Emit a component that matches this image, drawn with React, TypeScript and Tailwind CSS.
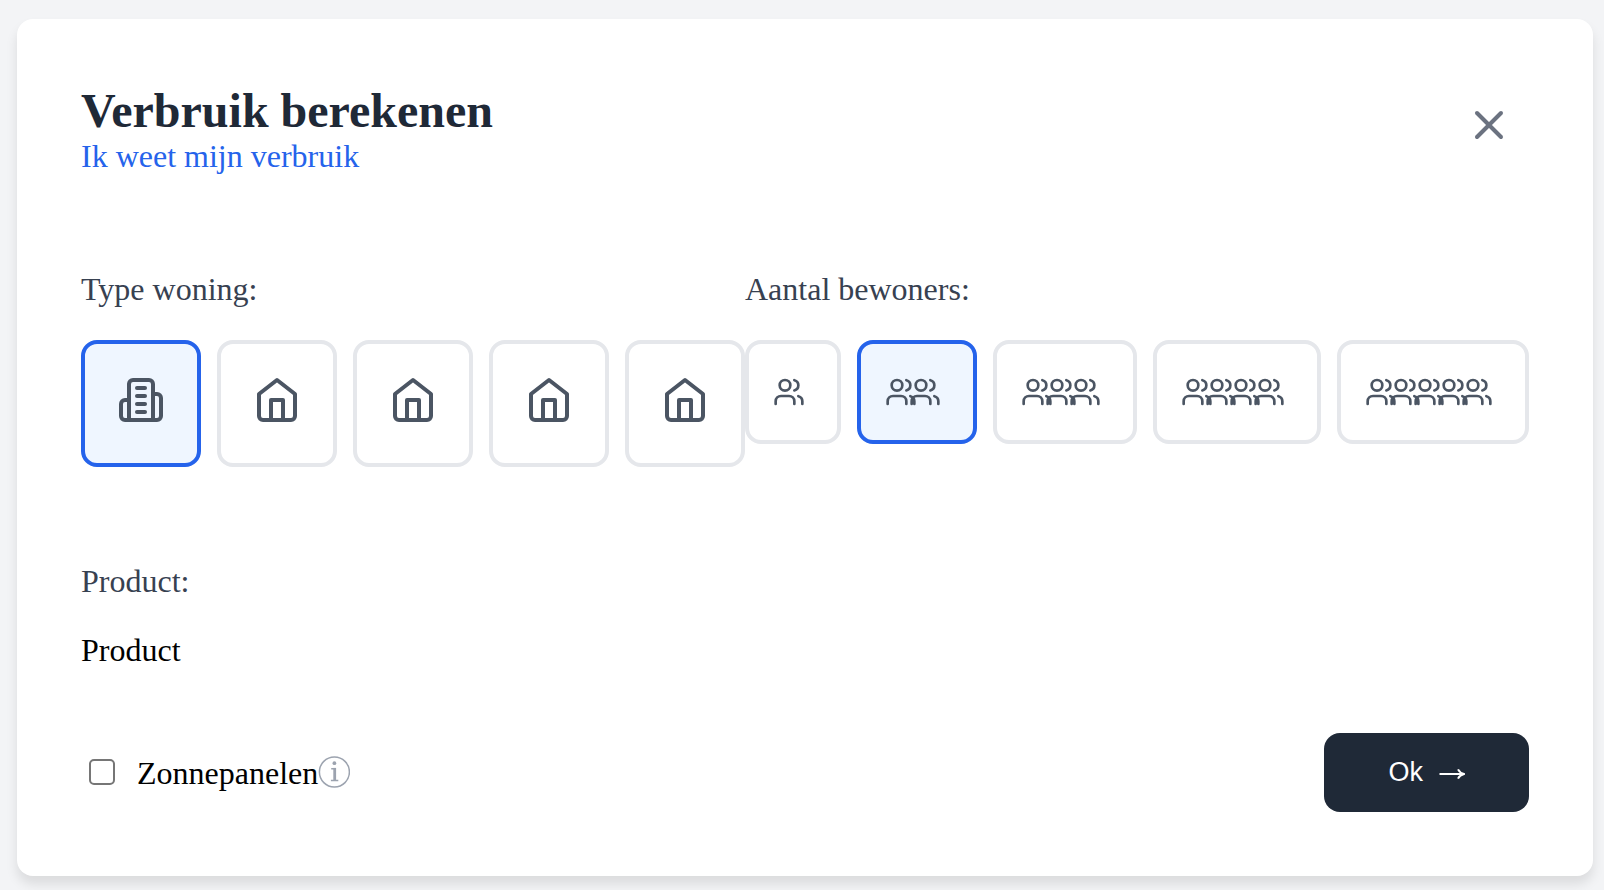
import { useState, type ReactNode } from "react";

function Icon({ className, children }: { className: string; children: ReactNode }) {
  return (
    <svg
      viewBox="0 0 24 24"
      fill="none"
      stroke="currentColor"
      strokeWidth="2"
      strokeLinecap="round"
      strokeLinejoin="round"
      aria-hidden="true"
      className={className}
    >
      {children}
    </svg>
  );
}

function BuildingIcon() {
  return (
    <Icon className="size-12">
      <path d="M6 22V4a2 2 0 0 1 2-2h8a2 2 0 0 1 2 2v18Z" />
      <path d="M6 12H4a2 2 0 0 0-2 2v6a2 2 0 0 0 2 2h2" />
      <path d="M18 9h2a2 2 0 0 1 2 2v9a2 2 0 0 1-2 2h-2" />
      <path d="M10 6h4" />
      <path d="M10 10h4" />
      <path d="M10 14h4" />
      <path d="M10 18h4" />
    </Icon>
  );
}

function HouseIcon() {
  return (
    <Icon className="size-12">
      <path d="m3 9 9-7 9 7v11a2 2 0 0 1-2 2H5a2 2 0 0 1-2-2z" />
      <polyline points="9 22 9 12 15 12 15 22" />
    </Icon>
  );
}

function UsersIcon() {
  return (
    <Icon className="-ml-2 size-8 shrink-0">
      <path d="M16 21v-2a4 4 0 0 0-4-4H6a4 4 0 0 0-4 4v2" />
      <circle cx="9" cy="7" r="4" />
      <path d="M22 21v-2a4 4 0 0 0-3-3.87" />
      <path d="M16 3.13a4 4 0 0 1 0 7.75" />
    </Icon>
  );
}

const homes = ["Appartement", "Tussenwoning", "Hoekwoning", "Twee-onder-een-kap", "Vrijstaand"];
const residents = [1, 2, 3, 4, 5];

const option = "flex rounded-2xl border-4 px-8 pt-8 text-[#4b5563] cursor-pointer";
const idle = "border-[#e5e7eb] bg-white";
const active = "border-[#2563eb] bg-[#eff6ff]";

export default function App() {
  const [home, setHome] = useState(0);
  const [count, setCount] = useState(2);
  const [solar, setSolar] = useState(false);

  return (
    <div className="min-h-screen bg-[#f3f4f6] pt-[19px] pr-[11px] pb-[14px] pl-[17px] font-['Liberation_Serif',serif] text-[32px] leading-[37px] text-black">
      <main className="rounded-2xl bg-white p-16 shadow-[0_8px_12px_rgba(0,0,0,0.1)]">
        <header className="mb-24 flex items-center justify-between">
          <div>
            <h1 className="text-[48px] leading-[55px] font-bold text-[#1f2937]">Verbruik berekenen</h1>
            <a href="#verbruik" className="block text-[#2563eb]">
              Ik weet mijn verbruik
            </a>
          </div>
          <button type="button" aria-label="Sluiten" className="cursor-pointer px-4 pt-4 pb-6 text-[#6b7280]">
            <Icon className="size-12">
              <path d="M18 6 6 18" />
              <path d="m6 6 12 12" />
            </Icon>
          </button>
        </header>

        <div className="mb-24 flex items-start justify-between">
          <section aria-labelledby="woning">
            <h2 id="woning" className="mb-8 text-[#374151]">
              Type woning:
            </h2>
            <div className="flex gap-4">
              {homes.map((name, i) => (
                <button
                  key={name}
                  type="button"
                  aria-label={name}
                  aria-pressed={home === i}
                  onClick={() => setHome(i)}
                  className={`${option} pb-[39px] ${home === i ? active : idle}`}
                >
                  {i === 0 ? <BuildingIcon /> : <HouseIcon />}
                </button>
              ))}
            </div>
          </section>

          <section aria-labelledby="bewoners">
            <h2 id="bewoners" className="mb-8 text-[#374151]">
              Aantal bewoners:
            </h2>
            <div className="flex gap-4">
              {residents.map((n) => (
                <button
                  key={n}
                  type="button"
                  aria-label={`${n}`}
                  aria-pressed={count === n}
                  onClick={() => setCount(n)}
                  className={`${option} pb-8 ${count === n ? active : idle}`}
                >
                  {Array.from({ length: n }, (_, i) => (
                    <UsersIcon key={i} />
                  ))}
                </button>
              ))}
            </div>
          </section>
        </div>

        <section className="mb-16">
          <h2 className="mb-8 text-[#374151]">Product:</h2>
          <p>Product</p>
        </section>

        <footer className="flex items-center justify-between">
          <div className="flex items-center pb-0.5">
            <input
              id="zonnepanelen"
              type="checkbox"
              checked={solar}
              onChange={(e) => setSolar(e.target.checked)}
              className="mr-[22px] ml-2 size-[26px] appearance-none rounded-[5px] border-2 border-[#767676] bg-white checked:bg-[#2563eb]"
            />
            <label htmlFor="zonnepanelen" className="pt-1">
              Zonnepanelen
            </label>
            <svg viewBox="0 0 32 32" fill="none" stroke="#9ca3af" role="img" aria-label="Informatie" className="size-8">
              <circle cx="16.4" cy="16" r="15" strokeWidth="1.5" />
              <circle cx="16.4" cy="7.2" r="1.9" fill="#9ca3af" stroke="none" />
              <path d="M13.2 12.7h3.4M12.9 24.5h7.4" strokeWidth="1.6" />
              <path d="M16.7 11.9v12.6" strokeWidth="2.8" />
            </svg>
          </div>
          <button
            type="button"
            className="flex cursor-pointer items-center gap-4 rounded-2xl bg-[#1f2937] px-16 py-6 font-['Liberation_Sans',sans-serif] text-[27px] leading-[31px] text-white"
          >
            Ok
            <svg viewBox="0 0 26 31" fill="none" stroke="currentColor" aria-hidden="true" className="h-[31px] w-[26px]">
              <path d="M0.5 17H24" strokeWidth="2" />
              <path d="M19 12.4Q20.8 15.8 25 17Q20.8 18.2 19 21.6" strokeWidth="2" />
            </svg>
          </button>
        </footer>
      </main>
    </div>
  );
}
